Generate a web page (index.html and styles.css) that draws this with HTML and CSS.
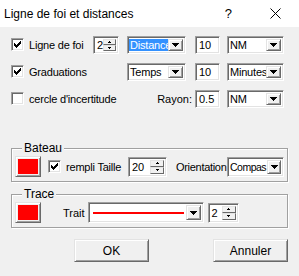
FILE: index.html
```html
<!DOCTYPE html>
<html lang="fr">
<head>
  <meta charset="UTF-8">
  <title>Ligne de foi et distances</title>
  <link rel="stylesheet" href="styles.css">
</head>
<body>

<div class="dialog">
  <header class="title-bar">
    <span class="title">Ligne de foi et distances</span>
    <span class="btn-help">?</span>
    <svg class="btn-close" width="11" height="11" viewBox="0 0 11 11">
      <path d="M0.5 0.5L10.5 10.5M10.5 0.5L0.5 10.5" stroke="#000" stroke-width="1"/>
    </svg>
  </header>

  <div class="options">
    <!-- ligne 1 -->
    <div class="cell-first">
      <label class="check check-wide">
        <span class="checkbox"><svg width="7" height="7" viewBox="0 0 7 7"><path d="M0 2h1v1h1v1h1v-1h1v-1h1v-1h1v-1h1v3h-1v1h-1v1h-1v1h-1v1h-1v-1h-1v-1h-1z"/></svg></span>
        Ligne de foi
      </label>
      <span class="spin spin-small">
        <span class="spin-value">2</span>
        <span class="spin-btns">
          <span class="spin-btn"><svg width="3" height="2" viewBox="0 0 3 2"><path d="M1 0h1v1h1v1h-3v-1h1z"/></svg></span>
          <span class="spin-btn"><svg width="3" height="2" viewBox="0 0 3 2"><path d="M0 0h3v1h-1v1h-1v-1h-1z"/></svg></span>
        </span>
      </span>
    </div>
    <div class="combo combo-mid">
      <span class="combo-value is-selected">Distance</span>
      <span class="combo-btn"><svg width="7" height="4" viewBox="0 0 7 4"><path d="M0 0h7v1h-1v1h-1v1h-1v1h-1v-1h-1v-1h-1v-1h-1z"/></svg></span>
    </div>
    <div class="edit">10</div>
    <div class="combo combo-unit">
      <span class="combo-value">NM</span>
      <span class="combo-btn"><svg width="7" height="4" viewBox="0 0 7 4"><path d="M0 0h7v1h-1v1h-1v1h-1v1h-1v-1h-1v-1h-1v-1h-1z"/></svg></span>
    </div>

    <!-- ligne 2 -->
    <label class="check">
      <span class="checkbox"><svg width="7" height="7" viewBox="0 0 7 7"><path d="M0 2h1v1h1v1h1v-1h1v-1h1v-1h1v-1h1v3h-1v1h-1v1h-1v1h-1v1h-1v-1h-1v-1h-1z"/></svg></span>
      Graduations
    </label>
    <div class="combo combo-mid">
      <span class="combo-value">Temps</span>
      <span class="combo-btn"><svg width="7" height="4" viewBox="0 0 7 4"><path d="M0 0h7v1h-1v1h-1v1h-1v1h-1v-1h-1v-1h-1v-1h-1z"/></svg></span>
    </div>
    <div class="edit">10</div>
    <div class="combo combo-unit">
      <span class="combo-value">Minutes</span>
      <span class="combo-btn"><svg width="7" height="4" viewBox="0 0 7 4"><path d="M0 0h7v1h-1v1h-1v1h-1v1h-1v-1h-1v-1h-1v-1h-1z"/></svg></span>
    </div>

    <!-- ligne 3 -->
    <label class="check">
      <span class="checkbox"></span>
      cercle d'incertitude
    </label>
    <span class="label-right">Rayon:</span>
    <div class="edit">0.5</div>
    <div class="combo combo-unit">
      <span class="combo-value">NM</span>
      <span class="combo-btn"><svg width="7" height="4" viewBox="0 0 7 4"><path d="M0 0h7v1h-1v1h-1v1h-1v1h-1v-1h-1v-1h-1v-1h-1z"/></svg></span>
    </div>
  </div>

  <fieldset class="group group-boat">
    <legend>Bateau</legend>
    <div class="group-row">
      <span class="btn color-btn"><span class="color-swatch"></span></span>
      <label class="check check-fill">
        <span class="checkbox"><svg width="7" height="7" viewBox="0 0 7 7"><path d="M0 2h1v1h1v1h1v-1h1v-1h1v-1h1v-1h1v3h-1v1h-1v1h-1v1h-1v1h-1v-1h-1v-1h-1z"/></svg></span>
        rempli Taille
      </label>
      <span class="spin spin-size">
        <span class="spin-value">20</span>
        <span class="spin-btns">
          <span class="spin-btn"><svg width="3" height="2" viewBox="0 0 3 2"><path d="M1 0h1v1h1v1h-3v-1h1z"/></svg></span>
          <span class="spin-btn"><svg width="3" height="2" viewBox="0 0 3 2"><path d="M0 0h3v1h-1v1h-1v-1h-1z"/></svg></span>
        </span>
      </span>
      <span class="label-orient">Orientation</span>
      <div class="combo combo-unit combo-tall">
        <span class="combo-value">Compas</span>
        <span class="combo-btn"><svg width="7" height="4" viewBox="0 0 7 4"><path d="M0 0h7v1h-1v1h-1v1h-1v1h-1v-1h-1v-1h-1v-1h-1z"/></svg></span>
      </div>
    </div>
  </fieldset>

  <fieldset class="group group-trace">
    <legend>Trace</legend>
    <div class="group-row">
      <span class="btn color-btn"><span class="color-swatch"></span></span>
      <span class="label-trait">Trait</span>
      <div class="combo combo-line">
        <span class="combo-value"><span class="line-sample"></span></span>
        <span class="combo-btn"><svg width="7" height="4" viewBox="0 0 7 4"><path d="M0 0h7v1h-1v1h-1v1h-1v1h-1v-1h-1v-1h-1v-1h-1z"/></svg></span>
      </div>
      <span class="spin spin-width">
        <span class="spin-value">2</span>
        <span class="spin-btns">
          <span class="spin-btn"><svg width="3" height="2" viewBox="0 0 3 2"><path d="M1 0h1v1h1v1h-3v-1h1z"/></svg></span>
          <span class="spin-btn"><svg width="3" height="2" viewBox="0 0 3 2"><path d="M0 0h3v1h-1v1h-1v-1h-1z"/></svg></span>
        </span>
      </span>
    </div>
  </fieldset>

  <div class="actions">
    <button type="button" class="btn btn-action">OK</button>
    <button type="button" class="btn btn-action">Annuler</button>
  </div>
</div>

</body>
</html>
```

FILE: styles.css
```css
body {
  margin: 0;
  background: #f0f0f0;
  font-family: "Liberation Sans", Arial, sans-serif;
  font-size: 11px;
  color: #000;
}
.dialog {
  width: 299px;
  height: 276px;
  overflow: hidden;
}
.title-bar {
  display: flex;
  align-items: center;
  height: 27px;
  background: #fff;
  padding-left: 4px;
  box-sizing: border-box;
}
.title {
  flex: 1;
  font-size: 12px;
}
.btn-help {
  font-size: 13px;
  margin-right: 38px;
}
.btn-close {
  margin-right: 18px;
}

/* options du haut */
.options {
  display: grid;
  grid-template-columns: 116px 68px 32px 57px;
  grid-auto-rows: 27px;
  align-items: center;
  padding: 4px 0 0 11px;
}
.cell-first {
  display: flex;
  align-items: center;
}
.check {
  display: flex;
  align-items: center;
  white-space: nowrap;
  letter-spacing: -0.2px;
}
.check-wide {
  width: 82px;
}
.checkbox {
  display: flex;
  align-items: center;
  justify-content: center;
  width: 13px;
  height: 13px;
  box-sizing: border-box;
  margin-right: 5px;
  background: #fff;
  border: 1px solid;
  border-color: #a0a0a0 #fff #fff #a0a0a0;
  box-shadow: inset 1px 1px #696969, inset -1px -1px #e3e3e3;
}
.checkbox svg {
  fill: #000;
}

.edit,
.combo,
.spin {
  display: flex;
  height: 18px;
  box-sizing: border-box;
  background: #fff;
  border: 1px solid;
  border-color: #a0a0a0 #fff #fff #a0a0a0;
  box-shadow: inset 1px 1px #696969, inset -1px -1px #e3e3e3;
}
.edit {
  width: 25px;
  align-items: center;
  padding: 1px 3px 0;
}
.combo {
  padding: 2px 2px 2px 1px;
}
.combo-mid {
  width: 59px;
}
.combo-unit {
  width: 57px;
}
.combo-tall {
  height: 20px;
}
.combo-value {
  flex: 1;
  min-width: 0;
  display: flex;
  align-items: center;
  white-space: nowrap;
  padding-left: 1px;
  letter-spacing: -0.2px;
}
.combo-tall .combo-value {
  font-size: 10.5px;
  letter-spacing: -0.5px;
}
.combo-value.is-selected {
  overflow: hidden;
  background: #3391ff;
  color: #fff;
}
.combo-btn {
  position: relative;
  flex: none;
  display: flex;
  align-items: center;
  justify-content: center;
  width: 15px;
  box-sizing: border-box;
  background: #f0f0f0;
  border: 1px solid;
  border-color: #e3e3e3 #696969 #696969 #e3e3e3;
  box-shadow: inset 1px 1px #fff, inset -1px -1px #a0a0a0;
}
.combo-tall .combo-btn {
  width: 14px;
}
.combo-btn svg,
.spin-btn svg {
  fill: #000;
}

.spin {
  padding: 2px;
}
.spin-small {
  width: 26px;
}
.spin-value {
  flex: 1;
  display: flex;
  align-items: center;
  padding-left: 1px;
}
.spin-btns {
  display: flex;
  flex-direction: column;
  width: 14px;
}
.spin-btn {
  flex: 1;
  display: flex;
  align-items: center;
  justify-content: center;
  box-sizing: border-box;
  background: #f0f0f0;
  border: 1px solid;
  border-color: #e3e3e3 #696969 #696969 #e3e3e3;
}
.label-right {
  justify-self: end;
  margin-right: 3px;
}

/* cadres */
.group {
  margin: 30px 11px 0;
  padding: 1px 3px 4px;
  border: 1px solid #a0a0a0;
  box-shadow: inset 1px 1px #fff, 1px 1px #fff;
}
.group legend {
  margin-left: 7px;
  padding: 0 2px;
  font-size: 12px;
  line-height: 13px;
  background: #f0f0f0;
}
.group-trace {
  margin-top: 6px;
}
.group-row {
  display: flex;
  align-items: center;
}
.btn {
  box-sizing: border-box;
  background: #f0f0f0;
  border: 1px solid;
  border-color: #e3e3e3 #696969 #696969 #e3e3e3;
  box-shadow: inset 1px 1px #fff, inset -1px -1px #a0a0a0;
}
.color-btn {
  display: flex;
  width: 26px;
  height: 21px;
  padding: 2px;
}
.color-swatch {
  flex: 1;
  background: #ff0000;
}
.check-fill {
  margin-left: 7px;
  width: 80px;
}
.spin-size {
  width: 39px;
  height: 20px;
}
.label-orient {
  margin-left: 9px;
  width: 51px;
  letter-spacing: -0.3px;
}
.label-trait {
  margin-left: 22px;
  margin-right: 3px;
}
.combo-line {
  width: 116px;
  height: 21px;
}
.line-sample {
  flex: 1;
  height: 2px;
  margin: 0 2px;
  background: #ff0000;
}
.spin-width {
  width: 31px;
  height: 20px;
  margin-left: 4px;
}

.actions {
  display: flex;
  justify-content: space-between;
  padding: 11px 10px 0 74px;
  margin-right: 1px;
}
.btn-action {
  width: 75px;
  height: 23px;
  padding: 0;
  font-family: inherit;
  font-size: 12px;
  color: #000;
}
```
